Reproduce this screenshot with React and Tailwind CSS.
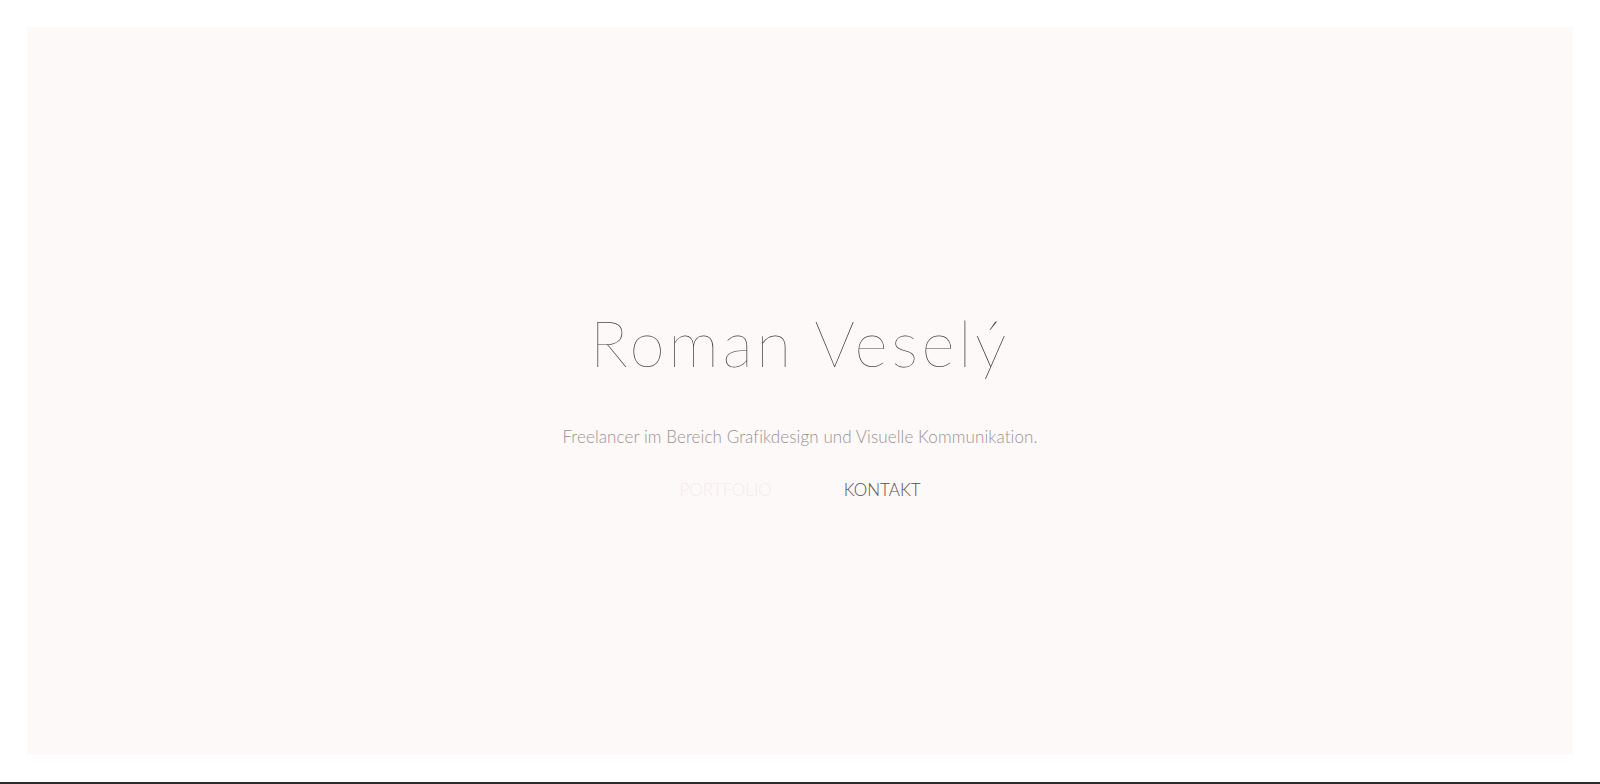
import React from 'react';

const App = () => {
  return (
    <div className="h-[784px] w-full bg-white flex flex-col" style={{ fontFamily: 'Lato, "Open Sans", sans-serif' }}>
      {/* Hero panel */}
      <div className="mx-[27px] mt-[27px] h-[728px] bg-[#fef9f9] flex flex-col items-center justify-center">
        <div className="flex flex-col items-center pt-[26px]">
          <h1 className="text-[64px] leading-none font-thin text-[#484343] tracking-[3.6px]">Roman Veselý</h1>
          <p className="mt-[53px] text-[17px] leading-none font-light text-[#989292] tracking-[0.1px]">
            Freelancer im Bereich Grafikdesign und Visuelle Kommunikation.
          </p>
          <div className="mt-[36px] flex items-center gap-[72px] text-[17px] leading-none">
            <a href="#portfolio" className="text-[#f1ecec] font-light">PORTFOLIO</a>
            <a href="#kontakt" className="text-[#555050] font-light">KONTAKT</a>
          </div>
        </div>
      </div>
      <div className="flex-1" />
      <div className="h-[2px] bg-[#2b2b2b]" />
    </div>
  );
};

export default App;
